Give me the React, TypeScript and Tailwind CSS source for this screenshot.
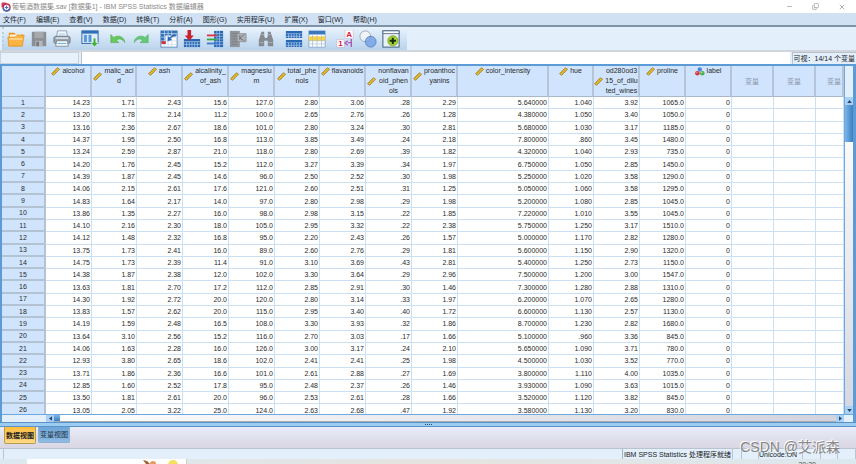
import React, { useState } from "react";
import { Minus, Copy, X } from "lucide-react";

type Measure = "scale" | "nominal";

interface Variable {
  name: string;
  lines: string[];
  measure: Measure;
  width: string;
}

const MENUS = [
  "文件(F)",
  "编辑(E)",
  "查看(V)",
  "数据(D)",
  "转换(T)",
  "分析(A)",
  "图形(G)",
  "实用程序(U)",
  "扩展(X)",
  "窗口(W)",
  "帮助(H)",
];

const VARIABLES: Variable[] = [
  { name: "alcohol", lines: ["alcohol"], measure: "scale", width: "w-[46px]" },
  { name: "malic_acid", lines: ["malic_aci", "d"], measure: "scale", width: "w-[45px]" },
  { name: "ash", lines: ["ash"], measure: "scale", width: "w-[46px]" },
  { name: "alcalinity_of_ash", lines: ["alcalinity_", "of_ash"], measure: "scale", width: "w-[46px]" },
  { name: "magnesium", lines: ["magnesiu", "m"], measure: "scale", width: "w-[46px]" },
  { name: "total_phenols", lines: ["total_phe", "nols"], measure: "scale", width: "w-[45px]" },
  { name: "flavanoids", lines: ["flavanoids"], measure: "scale", width: "w-[46px]" },
  { name: "nonflavanoid_phenols", lines: ["nonflavan", "oid_phen", "ols"], measure: "scale", width: "w-[46px]" },
  { name: "proanthocyanins", lines: ["proanthoc", "yanins"], measure: "scale", width: "w-[46px]" },
  { name: "color_intensity", lines: ["color_intensity"], measure: "scale", width: "w-[91px]" },
  { name: "hue", lines: ["hue"], measure: "scale", width: "w-[45px]" },
  { name: "od280", lines: ["od280od3", "15_of_dilu", "ted_wines"], measure: "scale", width: "w-[46px]" },
  { name: "proline", lines: ["proline"], measure: "scale", width: "w-[46px]" },
  { name: "label", lines: ["label"], measure: "nominal", width: "w-[46px]" },
];

const ROWS = [
  "14.23 1.71 2.43 15.6 127.0 2.80 3.06 .28 2.29 5.640000 1.040 3.92 1065.0 0",
  "13.20 1.78 2.14 11.2 100.0 2.65 2.76 .26 1.28 4.380000 1.050 3.40 1050.0 0",
  "13.16 2.36 2.67 18.6 101.0 2.80 3.24 .30 2.81 5.680000 1.030 3.17 1185.0 0",
  "14.37 1.95 2.50 16.8 113.0 3.85 3.49 .24 2.18 7.800000 .860 3.45 1480.0 0",
  "13.24 2.59 2.87 21.0 118.0 2.80 2.69 .39 1.82 4.320000 1.040 2.93 735.0 0",
  "14.20 1.76 2.45 15.2 112.0 3.27 3.39 .34 1.97 6.750000 1.050 2.85 1450.0 0",
  "14.39 1.87 2.45 14.6 96.0 2.50 2.52 .30 1.98 5.250000 1.020 3.58 1290.0 0",
  "14.06 2.15 2.61 17.6 121.0 2.60 2.51 .31 1.25 5.050000 1.060 3.58 1295.0 0",
  "14.83 1.64 2.17 14.0 97.0 2.80 2.98 .29 1.98 5.200000 1.080 2.85 1045.0 0",
  "13.86 1.35 2.27 16.0 98.0 2.98 3.15 .22 1.85 7.220000 1.010 3.55 1045.0 0",
  "14.10 2.16 2.30 18.0 105.0 2.95 3.32 .22 2.38 5.750000 1.250 3.17 1510.0 0",
  "14.12 1.48 2.32 16.8 95.0 2.20 2.43 .26 1.57 5.000000 1.170 2.82 1280.0 0",
  "13.75 1.73 2.41 16.0 89.0 2.60 2.76 .29 1.81 5.600000 1.150 2.90 1320.0 0",
  "14.75 1.73 2.39 11.4 91.0 3.10 3.69 .43 2.81 5.400000 1.250 2.73 1150.0 0",
  "14.38 1.87 2.38 12.0 102.0 3.30 3.64 .29 2.96 7.500000 1.200 3.00 1547.0 0",
  "13.63 1.81 2.70 17.2 112.0 2.85 2.91 .30 1.46 7.300000 1.280 2.88 1310.0 0",
  "14.30 1.92 2.72 20.0 120.0 2.80 3.14 .33 1.97 6.200000 1.070 2.65 1280.0 0",
  "13.83 1.57 2.62 20.0 115.0 2.95 3.40 .40 1.72 6.600000 1.130 2.57 1130.0 0",
  "14.19 1.59 2.48 16.5 108.0 3.30 3.93 .32 1.86 8.700000 1.230 2.82 1680.0 0",
  "13.64 3.10 2.56 15.2 116.0 2.70 3.03 .17 1.66 5.100000 .960 3.36 845.0 0",
  "14.06 1.63 2.28 16.0 126.0 3.00 3.17 .24 2.10 5.650000 1.090 3.71 780.0 0",
  "12.93 3.80 2.65 18.6 102.0 2.41 2.41 .25 1.98 4.500000 1.030 3.52 770.0 0",
  "13.71 1.86 2.36 16.6 101.0 2.61 2.88 .27 1.69 3.800000 1.110 4.00 1035.0 0",
  "12.85 1.60 2.52 17.8 95.0 2.48 2.37 .26 1.46 3.930000 1.090 3.63 1015.0 0",
  "13.50 1.81 2.61 20.0 96.0 2.53 2.61 .28 1.66 3.520000 1.120 3.82 845.0 0",
  "13.05 2.05 3.22 25.0 124.0 2.63 2.68 .47 1.92 3.580000 1.130 3.20 830.0 0",
].map((row) => row.split(" "));

const EMPTY_COLUMNS = [0, 1, 2];

const RulerIcon = () => (
  <svg viewBox="0 0 9 9" className="h-[9px] w-[9px] shrink-0" aria-hidden="true">
    <path d="M0.6 6.8 6.4 0.8 8.5 2.3 2.6 8.3Z" fill="#f0c42c" stroke="#8a6a14" strokeWidth="0.7" />
    <path d="M2.2 5.4l.9.9M3.6 4l.9.9M5 2.6l.9.9" stroke="#6b5310" strokeWidth="0.6" />
  </svg>
);

const NominalIcon = () => (
  <svg viewBox="0 0 10 9" className="h-[9px] w-[10px] shrink-0" aria-hidden="true">
    <circle cx="4.8" cy="2.4" r="2.2" fill="#4f86d6" />
    <circle cx="2.4" cy="6.2" r="2.3" fill="#d8383a" />
    <circle cx="7.3" cy="6.2" r="2.3" fill="#4caf50" />
    <circle cx="6.8" cy="5.6" r="0.8" fill="#b4e3b4" />
    <circle cx="1.9" cy="5.6" r="0.7" fill="#f2a0a0" />
  </svg>
);

const AppLogo = () => (
  <svg viewBox="0 0 10 10" className="h-[10px] w-[10px]" aria-hidden="true">
    <rect x="0.5" y="0.5" width="5" height="5" rx="1" fill="#d23c57" />
    <circle cx="5.6" cy="5.4" r="3.4" fill="#fff" stroke="#c2304e" strokeWidth="1.4" />
    <path d="M2.2 6a3.4 3.4 0 0 0 6.6.6" fill="none" stroke="#3e6fb4" strokeWidth="1.5" />
    <path d="M5.6 3.6v3.6M3.8 5.4h3.6" stroke="#3e6fb4" strokeWidth="1" />
  </svg>
);

const TOOL_GROUPS: { label: string; art: React.ReactNode }[][] = [
  [
    {
      label: "打开",
      art: (
        <>
          <path d="M2 3h6l2 2h8v3H2z" fill="#e8921c" />
          <path d="M3 5h13v4H3z" fill="#fff3d6" />
          <path d="M1 8h8l2-2h8l-2 12H2z" fill="#fbb444" stroke="#e08a18" strokeWidth="0.8" />
          <path d="M2.5 10h15" stroke="#fddc9a" strokeWidth="1.6" />
        </>
      ),
    },
    {
      label: "保存",
      art: (
        <>
          <path d="M2 2h16v16H2z" fill="#8b8f94" />
          <path d="M5 2h10v7H5z" fill="#a5a9ad" />
          <path d="M6 12h8v6H6z" fill="#b4b7ba" />
          <path d="M7 13h3v5H7z" fill="#75797e" />
        </>
      ),
    },
    {
      label: "打印",
      art: (
        <>
          <path d="M5 1h10l1 7H4z" fill="#fff" stroke="#77828f" strokeWidth="0.8" />
          <path d="M6 3h8v4H6z" fill="#cfe3f5" />
          <rect x="1" y="7" width="18" height="8" rx="2" fill="#98a2ae" stroke="#5f6b78" strokeWidth="0.8" />
          <path d="M3 9h14" stroke="#e4e9ef" strokeWidth="1.6" />
          <path d="M4 12h12l1 6H3z" fill="#fff" stroke="#66717d" strokeWidth="0.8" />
          <path d="M5 15h10" stroke="#74b4e4" strokeWidth="1.4" />
        </>
      ),
    },
  ],
  [
    {
      label: "重新调用对话框",
      art: (
        <>
          <rect x="1" y="1" width="18" height="14" fill="#dcecfb" stroke="#285f9f" />
          <path d="M1 1h18v3H1z" fill="#2e6eb5" />
          <path d="M3 5h4v9H3zM8 5h4v9H8z" fill="#5597da" stroke="#fff" strokeWidth="0.5" />
          <path d="M13.5 9h3v5h2.8L15 19l-4.3-5h2.8z" fill="#3fae3b" stroke="#fff" strokeWidth="0.6" />
        </>
      ),
    },
  ],
  [
    {
      label: "撤销",
      art: (
        <path
          d="M2 5v9h9L8.2 11.4C11 8.8 15 9.6 17.5 14 17.4 7.6 10.4 4.8 5.2 8.4z"
          fill="#66c95c"
          stroke="#45a846"
          strokeWidth="0.6"
        />
      ),
    },
    {
      label: "重做",
      art: (
        <path
          d="M18 5v9H9l2.8-2.6C9 8.8 5 9.6 2.5 14 2.6 7.6 9.6 4.8 14.8 8.4z"
          fill="#66c976"
          stroke="#45a85c"
          strokeWidth="0.6"
        />
      ),
    },
  ],
  [
    {
      label: "转到个案",
      art: (
        <>
          <rect x="1" y="1" width="18" height="18" fill="#fff" stroke="#5a83b3" />
          <path d="M1 1h18v5H1zM1 6h5v7H1z" fill="#3271b8" />
          <path d="M1 4h18M5 1v18M9 1v18M13 1v18M1 8h18M1 12h18M1 16h18" stroke="#c6daf0" strokeWidth="0.8" />
          <path d="M1.5 12.5h5v3h-5z" fill="#d92e3d" />
          <path
            d="M18 4c-4 0-6 2-7 4L8.5 6.5 8 13l6-2-2-1.5c1-1.5 3-2.5 6-2z"
            fill="#2865b3"
            stroke="#fff"
            strokeWidth="0.5"
          />
        </>
      ),
    },
    {
      label: "转到变量",
      art: (
        <>
          <path d="M1 10h18v9H1z" fill="#2a68b4" />
          <path d="M1 13h18M4 13v6M7 13v6M10 13v6M13 13v6M16 13v6M1 16h18" stroke="#a8caee" strokeWidth="0.8" />
          <path d="M5 0h4v6h3L7 12 2 6h3z" fill="#c9222d" />
        </>
      ),
    },
    {
      label: "变量",
      art: (
        <>
          <path d="M9 1h10v18H9z" fill="#2a68b4" />
          <path d="M12 1v18M15 1v18M9 4h10M9 7h10M9 10h10M9 13h10M9 16h10" stroke="#a8caee" strokeWidth="0.7" />
          <path d="M1 6h11" stroke="#dc3540" strokeWidth="2" />
          <path d="M1 10.5h11" stroke="#38a840" strokeWidth="2" />
          <path d="M1 15h11" stroke="#3f7bd0" strokeWidth="2" />
        </>
      ),
    },
    {
      label: "运行描述统计",
      art: (
        <>
          <path d="M1 1h11v18H1z" fill="#90959a" />
          <path d="M3 4h6M3 7h6M3 10h6M3 13h6M3 16h6" stroke="#7a7f85" strokeWidth="1" />
          <path d="M9 4h10v9H9z" fill="#aeb2b6" stroke="#858a90" strokeWidth="0.8" />
          <path d="M17 5l-5 4 5 3M12 6v5" fill="none" stroke="#6c7176" />
        </>
      ),
    },
  ],
  [
    {
      label: "查找",
      art: (
        <>
          <path d="M5 2h3v5l1 2h2l1-2V2h3l3 9v7h-6v-6H8v6H2v-7z" fill="#858a90" />
          <path d="M3 14h4M13 14h4M5 5h3M12 5h3" stroke="#afb3b7" />
        </>
      ),
    },
  ],
  [
    {
      label: "拆分文件",
      art: (
        <>
          <path d="M1 1h18v8H1zM1 11h18v8H1z" fill="#2a68b4" />
          <path d="M1 4h18M1 14h18" stroke="#7fb0e2" strokeWidth="0.8" />
          <path
            d="M4 4v5M7 4v5M10 4v5M13 4v5M16 4v5M4 14v5M7 14v5M10 14v5M13 14v5M16 14v5"
            stroke="#b6d4f2"
            strokeWidth="0.8"
          />
          <path d="M1 7h18M1 17h18" stroke="#a3c6ea" strokeWidth="0.8" />
        </>
      ),
    },
    {
      label: "选择个案",
      art: (
        <>
          <rect x="1" y="1" width="18" height="18" fill="#fff" stroke="#7b9cc2" strokeWidth="0.8" />
          <path d="M1 1h18v4H1z" fill="#3a78bd" />
          <path d="M1 7h18v5H1z" fill="#f8d040" />
          <path d="M5 5v14M10 5v14M15 5v14M1 12h18M1 15.5h18" stroke="#9cb6d3" strokeWidth="0.7" />
        </>
      ),
    },
  ],
  [
    {
      label: "值标签",
      art: (
        <>
          <rect x="10" y="0" width="9" height="9" fill="#fff" stroke="#d5a0b0" strokeWidth="0.5" />
          <rect x="1" y="11" width="8" height="8" fill="#fff" stroke="#d5a0b0" strokeWidth="0.5" />
          <text x="14.5" y="8" textAnchor="middle" fontSize="9" fontWeight="bold" fill="#d51c46">
            A
          </text>
          <text x="5" y="18" textAnchor="middle" fontSize="9" fontWeight="bold" fill="#d51c46">
            1
          </text>
          <path d="M17 10v9M17 14h-4M13 12l-3 2.5 3 2.5" fill="none" stroke="#a55ab5" strokeWidth="1.5" />
        </>
      ),
    },
    {
      label: "使用变量集",
      art: (
        <>
          <circle cx="7" cy="7" r="6" fill="#f4f6f9" fillOpacity="0.8" stroke="#9aa5b4" />
          <circle cx="13" cy="13" r="6" fill="#6fa0e6" fillOpacity="0.8" stroke="#5c82c0" />
        </>
      ),
    },
    {
      label: "定制工具栏",
      art: (
        <>
          <rect x="1" y="1" width="18" height="18" fill="#e9f0f7" stroke="#35506e" />
          <path d="M1 1h18v3H1z" fill="#fff" stroke="#35506e" strokeWidth="0.8" />
          <circle cx="12" cy="12" r="5.6" fill="#a2d530" stroke="#6c9a1c" strokeWidth="0.8" />
          <path d="M12 8.5v7M8.5 12h7" stroke="#1b2b12" strokeWidth="2.2" />
        </>
      ),
    },
  ],
];

const TitleBar = () => (
  <header className="flex h-[13px] shrink-0 items-center bg-white pl-[1px] pr-[10px] text-[#8a8a8a]">
    <AppLogo />
    <h1 className="ml-[1px] flex-1 whitespace-nowrap">葡萄酒数据集.sav [数据集1] - IBM SPSS Statistics 数据编辑器</h1>
    <div className="flex items-center gap-[19px]">
      <button type="button" aria-label="最小化">
        <Minus className="h-[7px] w-[7px]" />
      </button>
      <button type="button" aria-label="还原">
        <Copy className="h-[7px] w-[7px] -scale-y-100" />
      </button>
      <button type="button" aria-label="关闭">
        <X className="h-[8px] w-[8px]" />
      </button>
    </div>
  </header>
);

const MenuBar = () => (
  <nav className="flex h-[14px] shrink-0 items-center gap-[10px] border-b-2 border-[#7f93a6] bg-[#cfe1f2] pl-[3px] text-[#1d2733]">
    {MENUS.map((menu) => (
      <button key={menu} type="button" className="whitespace-nowrap">
        {menu}
      </button>
    ))}
  </nav>
);

const Toolbar = () => (
  <div className="flex h-[25px] shrink-0 border-b-2 border-[#d2d5dc] bg-[#e3f0fc] pl-[2px]">
    <div className="flex items-center gap-[6px] border-l-2 border-dotted border-[#b9cfe4] bg-linear-to-b from-[#e9f3fd] to-[#b9d3ec] pl-[1px] pr-[5px]">
      {TOOL_GROUPS.map((group, i) => (
        <div key={i} className="flex gap-[1px]">
          {group.map((tool) => (
            <button key={tool.label} type="button" aria-label={tool.label} className="flex w-[22px] justify-center">
              <svg viewBox="0 0 20 20" className="h-[18px] w-[18px]" aria-hidden="true">
                {tool.art}
              </svg>
            </button>
          ))}
        </div>
      ))}
    </div>
  </div>
);

const CellEditor = () => (
  <div className="flex h-[12px] shrink-0 items-stretch gap-[2px] bg-[#e3f0fc]">
    <input aria-label="单元格" readOnly className="w-[79px] border border-[#c9d3de] bg-[#e6f1fc]" />
    <input aria-label="值" className="min-w-0 flex-1 border-l border-[#b8c2cd] bg-white" />
    <span className="flex items-center whitespace-nowrap border-l border-t border-[#b8c2cd] px-[1px] text-[#222]">
      可视：14/14 个变量
    </span>
  </div>
);

const headCell = "border-b border-r-2 border-b-[#a9b8c9] border-r-[#b5c4d6] bg-[#d0e4fd] p-0 font-normal";

// slightly taller than its frame, so the last row runs under the scroll bar
const DataGrid = () => (
  <table className="h-[calc(100%+3px)] w-full table-fixed border-separate border-spacing-0 text-[#2b2b2b]">
    <thead>
      <tr className="h-[31px] align-top">
        <th className={`w-[44px] ${headCell}`} aria-label="个案" />
        {VARIABLES.map((v) => (
          <th key={v.name} scope="col" className={`${v.width} ${headCell}`}>
            <div className="flex items-center justify-center gap-[2px] overflow-hidden leading-[10px]">
              {v.measure === "scale" ? <RulerIcon /> : <NominalIcon />}
              <span className="whitespace-nowrap">
                {v.lines.map((line) => (
                  <span key={line} className="block">
                    {line}
                  </span>
                ))}
              </span>
            </div>
          </th>
        ))}
        {EMPTY_COLUMNS.map((i) => (
          <th
            key={i}
            scope="col"
            className={`${i < 2 ? "w-[42px]" : "w-auto"} ${headCell} overflow-hidden whitespace-nowrap align-middle text-[#8a97a6]`}
          >
            <span className={i < 2 ? "" : "pl-[10px]"}>变量</span>
          </th>
        ))}
      </tr>
    </thead>
    <tbody>
      {ROWS.map((row, r) => (
        <tr key={r}>
          <th scope="row" className="border-b-2 border-r-2 border-[#b3c3d4] bg-[#d0e4fd] p-0 font-normal">
            {r + 1}
          </th>
          {row.map((value, c) => (
            <td key={c} className="border-b border-r border-[#cbe0f2] bg-white p-0 pr-[1px] text-right">
              {value}
            </td>
          ))}
          {EMPTY_COLUMNS.map((i) => (
            <td key={i} className="border-b border-r border-[#cbe0f2] bg-white p-0" />
          ))}
        </tr>
      ))}
    </tbody>
  </table>
);

const arrowButton = "flex shrink-0 items-center justify-center bg-[#a9d0f5] text-[#2b4562]";

const VerticalScroll = () => (
  <div className="flex w-[9px] shrink-0 flex-col border-l border-[#6fa8de] bg-[#e3f0fc] pt-[31px]">
    <button type="button" aria-label="向上滚动" className={`h-[8px] ${arrowButton}`}>
      <svg viewBox="0 0 6 4" className="h-[3px] w-[5px]">
        <path d="M0 4 3 0l3 4z" fill="currentColor" />
      </svg>
    </button>
    <div className="flex-1 bg-linear-to-b from-white to-[#d8d8e2]">
      <div className="h-[37px] bg-linear-to-r from-[#7db6e8] to-[#3c7fc0]" />
    </div>
    <button type="button" aria-label="向下滚动" className={`h-[8px] ${arrowButton}`}>
      <svg viewBox="0 0 6 4" className="h-[3px] w-[5px]">
        <path d="M0 0 3 4l3-4z" fill="currentColor" />
      </svg>
    </button>
  </div>
);

const HorizontalScroll = () => (
  <div className="flex h-[8px] shrink-0 border-t border-[#6fa8de] bg-[#e3f0fc] pl-[44px] pr-[9px]">
    <button type="button" aria-label="向左滚动" className={`w-[8px] ${arrowButton}`}>
      <svg viewBox="0 0 4 6" className="h-[5px] w-[3px]">
        <path d="M4 0 0 3l4 3z" fill="currentColor" />
      </svg>
    </button>
    <div className="flex-1 border-b border-[#a8aab4] bg-linear-to-r from-white to-[#d3d3de]">
      <div className="h-full w-[6px] bg-linear-to-b from-[#7db6e8] to-[#3c7fc0]" />
    </div>
    <button type="button" aria-label="向右滚动" className={`w-[8px] ${arrowButton}`}>
      <svg viewBox="0 0 4 6" className="h-[5px] w-[3px]">
        <path d="M0 0l4 3-4 3z" fill="currentColor" />
      </svg>
    </button>
  </div>
);

const StatusBar = () => (
  <footer className="flex h-[11px] shrink-0 items-stretch whitespace-nowrap border-t border-[#b9c4d0] bg-[#e3f0fc] text-[#222]">
    <span className="ml-[3px] flex-1 border-l border-[#b9c4d0]" />
    <span className="flex w-[110px] items-center border-l border-[#a9b4c0] pl-[1px]">IBM SPSS Statistics 处理程序就绪</span>
    <span className="w-[9px] border-l border-[#b9c4d0]" />
    <span className="w-[17px] border-l border-[#b9c4d0]" />
    <span className="flex w-[44px] items-center border-l border-[#b9c4d0]">Unicode:ON</span>
    <span className="w-[18px] border-l border-[#b9c4d0]" />
    <span className="w-[17px] border-l border-[#b9c4d0]" />
    <span className="w-[19px] border-x border-[#b9c4d0]" />
  </footer>
);

// only the top edge of the desktop taskbar is visible below the window
const Taskbar = () => (
  <div className="flex h-[5px] shrink-0 overflow-hidden bg-linear-to-r from-[#dce8f0] via-[#e6e4e0] to-[#dbe8ee]">
    <div className="ml-[27px] flex w-[160px] justify-end border-r border-[#c8cdd2] bg-white pr-[5px]">
      <svg viewBox="0 0 38 5" className="h-[5px] w-[38px]" aria-hidden="true">
        <path d="M0 1l4 1 3 3H3z" fill="#a0602c" />
        <circle cx="10" cy="5" r="3" fill="#e89a62" />
        <circle cx="30" cy="6" r="5" fill="#f4e05a" />
      </svg>
    </div>
    <span className="ml-auto mr-[40px] pt-[1px] text-[#555]">20:20</span>
  </div>
);

const App: React.FC = () => {
  const [view, setView] = useState<"data" | "variable">("data");

  const tabStyle = (active: boolean) =>
    active
      ? "border-[#b89a50] bg-linear-to-b from-[#fdbf3c] to-[#fbd983] font-bold text-[#1b1b1b]"
      : "border-[#8fb0d0] bg-linear-to-b from-[#6ea6d8] to-[#8dbbe4] text-[#1f2f40]";

  return (
    <div className="relative flex h-screen flex-col overflow-hidden bg-[#e3f0fc] font-['Liberation_Sans','Noto_Sans_CJK_SC',sans-serif] text-[7px] leading-[9px]">
      <TitleBar />
      <MenuBar />
      <Toolbar />
      <CellEditor />
      <main className="flex min-h-0 flex-1 flex-col border-l-2 border-r-3 border-t-2 border-[#5b9bd8]">
        <div className="flex min-h-0 flex-1">
          <div className="min-w-0 flex-1 overflow-hidden">
            <DataGrid />
          </div>
          <VerticalScroll />
        </div>
        <HorizontalScroll />
      </main>
      <div className="flex h-[5px] shrink-0 items-center justify-center gap-[1px] border-y border-[#5b93c8] bg-[#9cccf2]">
        {[0, 1, 2, 3].map((dot) => (
          <span key={dot} className="h-[1px] w-[1px] bg-[#284a6c]" />
        ))}
      </div>
      <div className="flex h-[21px] shrink-0 items-start gap-[2px] bg-linear-to-b from-[#e9ecf9] to-[#d8d6e2] pl-[4px]">
        <button
          type="button"
          onClick={() => setView("data")}
          className={`h-[17px] w-[32px] whitespace-nowrap rounded-b-xs border border-t-0 ${tabStyle(view === "data")}`}
        >
          数据视图
        </button>
        <button
          type="button"
          onClick={() => setView("variable")}
          className={`h-[16px] w-[32px] whitespace-nowrap rounded-b-xs border border-t-0 ${tabStyle(view === "variable")}`}
        >
          变量视图
        </button>
      </div>
      <StatusBar />
      <Taskbar />
      <p className="pointer-events-none absolute bottom-2 right-4 text-[14px] leading-[18px] text-[#858585] [text-shadow:-1px_-1px_0_#fff]">
        CSDN @艾派森
      </p>
    </div>
  );
};

export default App;
